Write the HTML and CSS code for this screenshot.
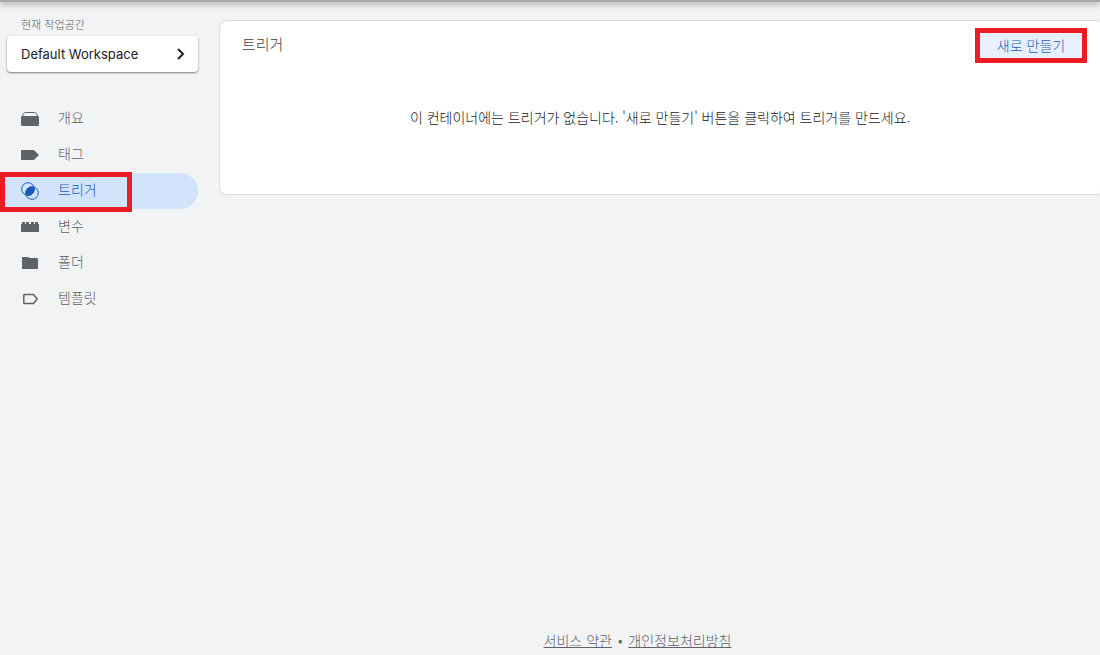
FILE: index.html
```html
<!DOCTYPE html>
<html lang="ko">

<head>
    <meta charset="UTF-8">
    <meta name="viewport" content="width=device-width, initial-scale=1.0">
    <title>트리거</title>
    <link rel="stylesheet" href="styles.css">
</head>

<body>

    <header class="topbar"></header>

    <div class="layout">
        <aside class="sidebar">
            <div class="workspace-label" id="workspace-label">현재 작업공간</div>
            <button type="button" class="workspace-btn" aria-describedby="workspace-label">
                <span>Default Workspace</span>
                <svg width="10" height="12" viewBox="0 0 10 12" fill="none" stroke="#202124" stroke-width="2">
                    <path d="M2 1l5 5-5 5" />
                </svg>
            </button>

            <nav class="nav">
                <a href="#" class="nav-item">
                    <svg width="18" height="18" viewBox="0 0 18 18" fill="currentColor">
                        <path fill="none" stroke="currentColor" d="M1 7l1.500-3.200c.4-.8 1-1.300 2-1.300h9c1 0 1.600.5 2 1.300L17 7" />
                        <path d="M0 7.500C0 6.600.6 6 1.500 6h15c.9 0 1.500.6 1.500 1.500v7c0 .9-.6 1.500-1.500 1.500h-15C.6 16 0 15.400 0 14.500z" />
                    </svg>
                    <span>개요</span>
                </a>
                <a href="#" class="nav-item">
                    <svg width="18" height="18" viewBox="0 0 18 18" fill="currentColor">
                        <path d="M0 4h12c.6 0 1 .2 1.400.6L18 9l-4.600 4.400c-.4.4-.8.6-1.400.6H0z" />
                    </svg>
                    <span>태그</span>
                </a>
                <a href="#" class="nav-item active marked">
                    <svg width="18" height="18" viewBox="0 0 18 18">
                        <g fill="none" stroke="currentColor" stroke-width="1">
                            <circle cx="7" cy="7" r="6.300" />
                            <circle cx="11" cy="11" r="6.300" />
                        </g>
                        <path fill="currentColor" d="M13.200 5.100A6.300 6.300 0 0 1 5.100 13.200A6.300 6.300 0 0 1 13.200 5.100z" />
                    </svg>
                    <span>트리거</span>
                </a>
                <a href="#" class="nav-item">
                    <svg width="18" height="18" viewBox="0 0 18 18" fill="currentColor">
                        <path d="M0 6h1V4h3v2h1V4h3v2h2V4h3v2h1V4h3v2h1v8H0z" />
                    </svg>
                    <span>변수</span>
                </a>
                <a href="#" class="nav-item">
                    <svg width="18" height="18" viewBox="0 0 18 18" fill="currentColor">
                        <path d="M2 3h5l2 1h6.500c.8 0 1.500.7 1.500 1.500V14c0 .6-.4 1-1 1H2c-.6 0-1-.4-1-1V4c0-.6.4-1 1-1z" />
                    </svg>
                    <span>폴더</span>
                </a>
                <a href="#" class="nav-item">
                    <svg width="18" height="18" viewBox="0 0 18 18" fill="none" stroke="currentColor" stroke-width="1.500" stroke-linejoin="round">
                        <path d="M3.500 4.500h9L16.200 9l-3.700 4.500h-9c-.5 0-.7-.3-.7-.7V5.200c0-.4.2-.7.7-.7z" />
                    </svg>
                    <span>템플릿</span>
                </a>
            </nav>
        </aside>

        <main class="content">
            <section class="card">
                <div class="card-header">
                    <h1>트리거</h1>
                    <button type="button" class="new-btn marked">새로 만들기</button>
                </div>
                <p class="empty">이 컨테이너에는 트리거가 없습니다. '새로 만들기' 버튼을 클릭하여 트리거를 만드세요.</p>
            </section>

            <footer class="footer">
                <a href="#">서비스 약관</a>
                <span>•</span>
                <a href="#">개인정보처리방침</a>
            </footer>
        </main>
    </div>

</body>

</html>
```

FILE: styles.css
```css
*,
*::after {
    box-sizing: border-box;
}

body {
    margin: 0;
    background-color: #f1f3f4;
    color: #3c4043;
    font-family: "Noto Sans CJK KR", sans-serif;
    font-weight: 300;
    font-size: 14px;
    line-height: 20px;
}

button {
    border: none;
    cursor: pointer;
    font-family: inherit;
    font-weight: inherit;
}

.topbar {
    height: 2px;
    background-color: #a9a9a9;
    box-shadow: 0 1px 6px rgba(0, 0, 0, 0.7);
}

.layout {
    display: flex;
    min-height: calc(100vh - 2px);
}

/* Sidebar */
.sidebar {
    flex: none;
    width: 198px;
    padding-top: 12px;
}

.workspace-label {
    margin-bottom: 2px;
    padding-left: 21px;
    color: #5f6368;
    font-size: 11px;
    line-height: 20px;
}

.workspace-btn {
    display: flex;
    align-items: center;
    justify-content: space-between;
    width: calc(100% - 7px);
    height: 36px;
    margin-left: 7px;
    padding: 0 12px 0 14px;
    background-color: white;
    border-radius: 4px;
    box-shadow: 0 1px 2px rgba(0, 0, 0, 0.5);
    color: #202124;
    font-family: Inter, sans-serif;
    font-size: 13px;
    font-weight: 400;
}

.nav {
    margin-top: 29px;
}

.nav-item {
    display: flex;
    align-items: center;
    gap: 19px;
    height: 36px;
    padding-left: 21px;
    border-radius: 0 18px 18px 0;
    color: #5f6368;
    text-decoration: none;
}

.nav-item span {
    padding-bottom: 4px;
}

.nav-item.active {
    background-color: #d2e3fc;
    color: #185abc;
}

/* Red callout frames */
.marked {
    position: relative;
}

.marked::after {
    content: "";
    position: absolute;
    border: 5px solid #ed1c24;
}

.nav-item.marked::after {
    top: -1px;
    left: 0;
    width: 132px;
    height: 40px;
}

.new-btn.marked::after {
    inset: -5px;
}

/* Content */
.content {
    flex: 1;
    display: flex;
    flex-direction: column;
    padding: 18px 0 5px 21px;
}

.card {
    min-height: 175px;
    background-color: white;
    border: 1px solid #dadce0;
    border-right: none;
    border-radius: 8px 4px 4px 8px;
}

.card-header {
    display: flex;
    align-items: flex-start;
    justify-content: space-between;
    padding: 12px 18px 0 22px;
}

.card-header h1 {
    margin: 0;
    font-size: 15px;
    font-weight: 300;
    line-height: 22px;
}

.new-btn {
    width: 102px;
    height: 25px;
    padding: 0 0 2px;
    background-color: #e8f0fe;
    color: #185abc;
    font-size: 14px;
}

.empty {
    margin: 49px 0;
    color: #202124;
    text-align: center;
}

.footer {
    display: flex;
    justify-content: center;
    gap: 6px;
    margin-top: auto;
    padding-right: 44px;
    color: #5f6368;
}

.footer a {
    color: inherit;
}
```
